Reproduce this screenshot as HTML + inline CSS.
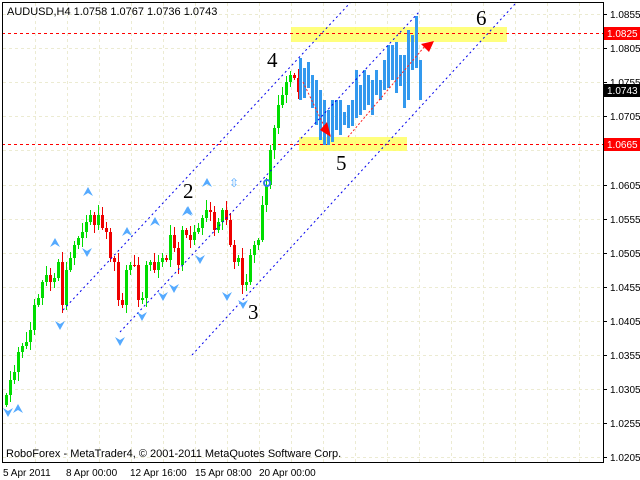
<!DOCTYPE html>
<html><head><meta charset="utf-8"><style>
body{margin:0;width:640px;height:480px;background:#fff;overflow:hidden;font-family:"Liberation Sans",sans-serif}
svg{display:block}
</style></head><body>
<svg id="s" width="640" height="480" xmlns="http://www.w3.org/2000/svg" font-family="Liberation Sans, sans-serif">
<rect x="0" y="0" width="640" height="480" fill="#fff"/>
<g id="grid" stroke="#ecebd2" stroke-dasharray="3,3" stroke-width="1"></g>
<rect x="291" y="27" width="216" height="15" fill="#ffff66" opacity="0.85"/>
<rect x="299" y="137" width="108" height="14" fill="#ffff66" opacity="0.85"/>
<line x1="2" y1="33.5" x2="603" y2="33.5" stroke="#f00" stroke-dasharray="3,3"/>
<line x1="2" y1="144.5" x2="603" y2="144.5" stroke="#f00" stroke-dasharray="3,3"/>
<g id="candles"></g>
<g stroke="#0000ee" stroke-dasharray="2,3" stroke-width="1">
<line x1="63" y1="310" x2="350" y2="3"/>
<line x1="120" y1="332" x2="420" y2="11"/>
<line x1="192" y1="355" x2="515" y2="4"/>
</g>
<g stroke="#f22" stroke-dasharray="2,2" fill="none"><line x1="303" y1="82" x2="325" y2="128"/><line x1="348" y1="137" x2="425" y2="46"/></g>
<polygon points="320,130 331,137 327,122" fill="#f00"/>
<polygon points="434,41 421,44 429,52" fill="#f00"/>
<g id="fr" fill="#55aaff"></g>
<circle cx="267" cy="183" r="3" fill="none" stroke="#3377ee" stroke-width="2"/>
<g font-family="Liberation Serif, serif" font-size="21" fill="#000">
<text x="267" y="67">4</text><text x="183" y="198">2</text><text x="248" y="319">3</text><text x="336" y="170">5</text><text x="476" y="25">6</text>
</g>
<text x="7" y="15" font-size="11" fill="#000">AUDUSD,H4  1.0758 1.0767 1.0736 1.0743</text>
<text x="6" y="457" font-size="11" fill="#000">RoboForex - MetaTrader4, © 2001-2011 MetaQuotes Software Corp.</text>
<rect x="2.5" y="2.5" width="601" height="460" fill="none" stroke="#000"/>
<g id="ax" font-size="10" fill="#000"></g>
<rect x="604" y="27" width="36" height="13" fill="#f00"/><text x="607" y="37" font-size="10" fill="#fff">1.0825</text>
<rect x="604" y="138" width="36" height="13" fill="#f00"/><text x="607" y="148" font-size="10" fill="#fff">1.0665</text>
<rect x="604" y="84" width="36" height="13" fill="#000"/><text x="607" y="94" font-size="10" fill="#fff">1.0743</text>
<g font-size="10" fill="#000"><text x="3" y="476">5 Apr 2011</text><text x="66" y="476">8 Apr 00:00</text><text x="130" y="476">12 Apr 16:00</text><text x="195" y="476">15 Apr 08:00</text><text x="259" y="476">20 Apr 00:00</text></g>
</svg>
<script>
(function(){
var NS="http://www.w3.org/2000/svg";
function el(p,t,a){var e=document.createElementNS(NS,t);for(var k in a)e.setAttribute(k,a[k]);p.appendChild(e);return e;}
var g=document.getElementById('grid');
for(var x=35;x<600;x+=32)el(g,'line',{x1:x+.5,y1:3,x2:x+.5,y2:462});
var labs=["1.0855","1.0805","1.0755","1.0705","1.0655","1.0605","1.0555","1.0505","1.0455","1.0405","1.0355","1.0305","1.0255","1.0205"];
var ax=document.getElementById('ax');
for(var i=0;i<14;i++){var y=Math.round(14+i*34.1);el(g,'line',{x1:3,y1:y+.5,x2:603,y2:y+.5});
el(ax,'line',{x1:603,y1:y+.5,x2:607,y2:y+.5,stroke:'#000'});
if(i!=4)el(ax,'text',{x:610,y:y+4}).textContent=labs[i];}
var c=[395,380,372,352,346,342,330,305,298,282,275,282,278,262,305,270,258,245,238,232,222,215,225,215,228,232,258,262,300,305,270,265,265,300,298,265,262,270,262,258,260,235,248,265,230,235,240,232,228,218,210,212,230,222,210,220,245,262,258,285,282,255,245,240,205,185,150,128,105,95,82,75,78,92];
var cg=document.getElementById('candles');var prev=405;
for(var i=0;i<c.length;i++){var x=5+4*i,o=prev,cl=c[i];var up=cl<o;var tp=Math.min(o,cl),bt=Math.max(o,cl);
var col=up?'#00dd00':'#ee0000';var h1=tp-((i*7)%9)-2,h2=bt+((i*5)%8)+2;
el(cg,'line',{x1:x+1.5,y1:h1,x2:x+1.5,y2:h2,stroke:col});
el(cg,'rect',{x:x,y:tp,width:3,height:Math.max(1,bt-tp),fill:col});prev=cl;}
var b=[[58,100],[68,98],[62,88],[75,108],[80,125],[90,140],[100,145],[110,145],[100,142],[100,130],[100,135],[112,125],[105,128],[100,126],[70,118],[85,115],[70,110],[75,105],[80,115],[70,95],[80,100],[60,90],[45,88],[45,80],[42,93],[55,86],[55,108],[30,100],[35,70],[16,68],[60,100]];
for(var i=0;i<b.length;i++){el(cg,'rect',{x:299+4*i,y:b[i][0],width:3,height:b[i][1]-b[i][0],fill:'#3399ee'});}
var fr=document.getElementById('fr');
var upA=[[55,243],[88,192],[127,232],[155,222],[188,211],[207,183],[18,409],[187,212]];
var dnA=[[60,325],[87,252],[120,341],[142,316],[163,296],[174,288],[200,259],[227,296],[243,304],[8,412]];
upA.forEach(function(p){el(fr,'polygon',{points:(p[0]-5)+','+(p[1]+4)+' '+p[0]+','+(p[1]-5)+' '+(p[0]+5)+','+(p[1]+4)+' '+p[0]+','+(p[1]+1)});});
dnA.forEach(function(p){el(fr,'polygon',{points:(p[0]-5)+','+(p[1]-4)+' '+p[0]+','+(p[1]+5)+' '+(p[0]+5)+','+(p[1]-4)+' '+p[0]+','+(p[1]-1)});});
el(fr,'text',{x:229,y:187,'font-size':12,fill:'#55aaff'}).textContent='⇳';
})();
</script>
</body></html>
